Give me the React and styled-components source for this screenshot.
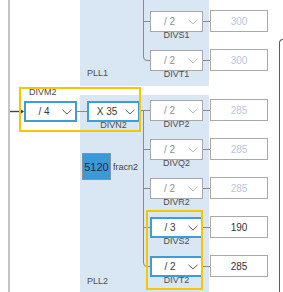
import React from "react";
import styled, { createGlobalStyle } from "styled-components";

const Global = createGlobalStyle`
  *, *::before, *::after { box-sizing: border-box; }
  html, body { margin: 0; padding: 0; background: #ffffff; }
  body { font-family: "Liberation Sans", Arial, sans-serif; }
`;

const Canvas = styled.div`
  position: relative;
  width: 283px;
  height: 292px;
  overflow: hidden;
  display: flex;
  background: #ffffff;
`;

const LeftRail = styled.div`
  flex: 0 0 72px;
  margin-left: 8px;
  border-left: 2px solid #c4c4c4;
  padding: 88px 0 0 14px;
`;

const NodeGroup = styled.div`
  display: flex;
  flex-direction: column;
  align-items: ${(p) => (p.$labelTop ? "flex-start" : "center")};
  width: 53px;
  margin-left: ${(p) => p.$indent || 0}px;
`;

const TopLabel = styled.div`
  font-size: 9px;
  line-height: 9px;
  height: 9px;
  color: #4a4a4a;
  margin: 0 0 4px 5px;
  white-space: nowrap;
`;

const PllColumn = styled.div`
  flex: 0 0 129px;
  display: flex;
  flex-direction: column;
  gap: 9px;
`;

const Panel = styled.div`
  display: flex;
  background: #d9e7f5;
  height: ${(p) => (p.$height ? `${p.$height}px` : "auto")};
  flex: ${(p) => (p.$height ? "0 0 auto" : "1 1 auto")};
`;

const PanelSide = styled.div`
  flex: 0 0 70px;
  display: flex;
  flex-direction: column;
  justify-content: ${(p) => (p.$bottom ? "flex-end" : "flex-start")};
  padding: ${(p) => p.$pad};
`;

const PllName = styled.div`
  font-size: 9px;
  line-height: 10px;
  color: #4f4f4f;
  margin-top: auto;
  margin-left: ${(p) => p.$indent || 0}px;
`;

const Rows = styled.div`
  display: flex;
  flex-direction: column;
  gap: 10px;
  padding-top: ${(p) => p.$top}px;
  width: 59px;
`;

const Row = styled.div`
  display: flex;
  flex-direction: column;
`;

const Line = styled.div`
  display: flex;
  align-items: flex-start;
  gap: 7px;
`;

const SelectBox = styled.div`
  flex: none;
  width: 53px;
  height: 21px;
  display: flex;
  align-items: center;
  background: #ffffff;
  border: ${(p) => (p.$active ? "2px solid #3c9dd9" : "1px solid #a8a8a8")};
  padding: 0 ${(p) => (p.$active ? 3 : 4)}px 0 0;
`;

const SelectText = styled.span`
  flex: 1;
  text-align: center;
  font-size: 10px;
  line-height: 12px;
  color: ${(p) => (p.$active ? "#3a3a3a" : "#8e8e8e")};
  white-space: pre;
`;

const Chevron = styled.svg`
  flex: none;
  width: 10px;
  height: 6px;
  display: block;
`;

const Output = styled.div`
  flex: none;
  width: 58px;
  height: 22px;
  margin-top: -1px;
  border: 1px solid #a9a9a9;
  background: #ffffff;
  display: flex;
  align-items: center;
  justify-content: center;
  font-size: 10px;
  color: ${(p) => (p.$active ? "#333333" : "#b5c8e2")};
`;

const NodeLabel = styled.div`
  width: 53px;
  text-align: center;
  font-size: 9px;
  line-height: 9px;
  height: 9px;
  margin-top: -1px;
  color: #4d4d4d;
  white-space: nowrap;
`;

const FracRow = styled.div`
  display: flex;
  align-items: center;
  gap: 2px;
  margin-top: 23px;
`;

const FracBox = styled.div`
  flex: none;
  width: 29px;
  height: 27px;
  background: #3a9ad8;
  border: 1px solid #8593a0;
  display: flex;
  align-items: center;
  justify-content: center;
  font-size: 11px;
  color: #1b2a3c;
`;

const FracLabel = styled.span`
  font-size: 9px;
  color: #3f3f3f;
`;

const RightFrame = styled.div`
  flex: 1 1 auto;
  margin: 39px 0 0 70px;
  border-left: 1px solid #5c5c5c;
  border-top: 1px solid #5c5c5c;
  border-top-left-radius: 4px;
`;

const Wires = styled.svg`
  position: absolute;
  left: 0;
  top: 0;
  width: 283px;
  height: 292px;
  pointer-events: none;
`;

const Highlight = styled.div`
  position: absolute;
  left: ${(p) => p.$x}px;
  top: ${(p) => p.$y}px;
  width: ${(p) => p.$w}px;
  height: ${(p) => p.$h}px;
  border: 2px solid #f6c700;
  pointer-events: none;
`;

function Select({ value, active }) {
  return (
    <SelectBox $active={active}>
      <SelectText $active={active}>{value}</SelectText>
      <Chevron viewBox="0 0 10 6">
        <polyline
          points="0.5,0.8 5,5 9.5,0.8"
          fill="none"
          stroke={active ? "#5a5a5a" : "#bdbdbd"}
          strokeWidth="1"
        />
      </Chevron>
    </SelectBox>
  );
}

function DividerRow({ value, out, label, active, outActive }) {
  return (
    <Row>
      <Line>
        <Select value={value} active={active} />
        <Output $active={outActive}>{out}</Output>
      </Line>
      <NodeLabel>{label}</NodeLabel>
    </Row>
  );
}

const pll1 = [
  { value: "/ 2", out: "300", label: "DIVS1" },
  { value: "/ 2", out: "300", label: "DIVT1" },
];

const pll2 = [
  { value: "/ 2", out: "285", label: "DIVP2" },
  { value: "/ 2", out: "285", label: "DIVQ2" },
  { value: "/ 2", out: "285", label: "DIVR2" },
  { value: "/ 3", out: "190", label: "DIVS2", active: true, outActive: true },
  { value: "/ 2", out: "285", label: "DIVT2", active: true, outActive: true },
];

const WIRE = "#8a8a8a";

export default function App() {
  return (
    <>
      <Global />
      <Canvas>
        <LeftRail>
          <NodeGroup $labelTop>
            <TopLabel>DIVM2</TopLabel>
            <Select value="/ 4" active />
          </NodeGroup>
        </LeftRail>

        <PllColumn>
          <Panel $height={86}>
            <PanelSide $bottom $pad="0 0 8px 7px">
              <PllName>PLL1</PllName>
            </PanelSide>
            <Rows $top={11}>
              {pll1.map((r) => (
                <DividerRow key={r.label} {...r} />
              ))}
            </Rows>
          </Panel>

          <Panel>
            <PanelSide $pad="6px 0 6px 2px">
              <NodeGroup $indent={5}>
                <Select value="X 35" active />
                <NodeLabel>DIVN2</NodeLabel>
              </NodeGroup>
              <FracRow>
                <FracBox>5120</FracBox>
                <FracLabel>fracn2</FracLabel>
              </FracRow>
              <PllName $indent={5}>PLL2</PllName>
            </PanelSide>
            <Rows $top={5}>
              {pll2.map((r) => (
                <DividerRow key={r.label} {...r} />
              ))}
            </Rows>
          </Panel>
        </PllColumn>

        <RightFrame />

        <Wires viewBox="0 0 283 292">
          <g fill="none" stroke={WIRE} strokeWidth="1">
            <path d="M143.5 0 V57 Q143.5 60.5 147 60.5 H150" />
            <path d="M143.5 21.5 H150" />
            <path d="M203 21.5 H210" />
            <path d="M203 60.5 H210" />
            <path d="M77 111.5 H87" />
            <path d="M139 110.5 H150" />
            <path d="M143.5 110.5 V263 Q143.5 266.5 147 266.5 H150" />
            <path d="M143.5 149.5 H150" />
            <path d="M143.5 188.5 H150" />
            <path d="M143.5 227.5 H150" />
            {[110.5, 149.5, 188.5, 227.5, 266.5].map((y) => (
              <path key={y} d={`M203 ${y} H210`} />
            ))}
          </g>
          <path d="M10 111.5 H20" stroke="#444" strokeWidth="1.4" />
          <polygon points="19,108 24,111.5 19,115" fill="#333" />
        </Wires>

        <Highlight $x={19} $y={87} $w={122} $h={45} />
        <Highlight $x={146} $y={210} $w={57} $h={80} />
      </Canvas>
    </>
  );
}
